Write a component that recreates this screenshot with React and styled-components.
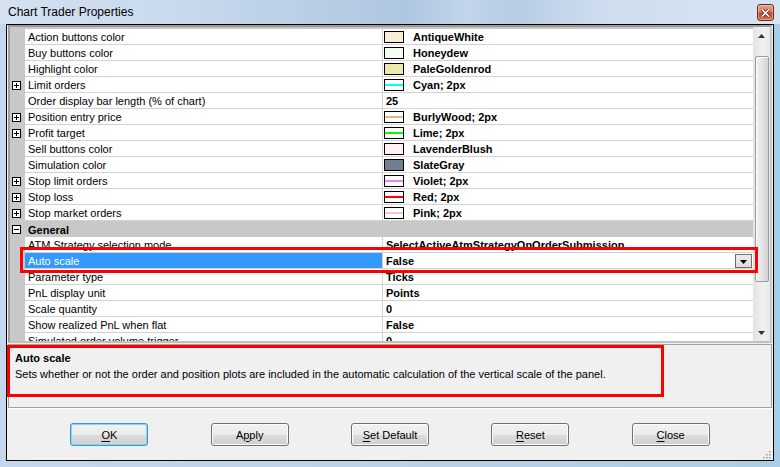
import React from "react"
import styled, { createGlobalStyle } from "styled-components"

const GlobalStyle = createGlobalStyle`
    html, body {
        margin: 0;
        padding: 0;
        background: #ffffff;
    }
    body {
        font-family: "Liberation Sans", Arial, sans-serif;
        font-size: 11px;
        color: #000;
    }
    * {
        box-sizing: border-box;
    }
`

const rows = [
    { name: "Action buttons color", value: "AntiqueWhite", fill: "#FAEBD7" },
    { name: "Buy buttons color", value: "Honeydew", fill: "#F0FFF0" },
    { name: "Highlight color", value: "PaleGoldenrod", fill: "#EEE8AA" },
    { name: "Limit orders", value: "Cyan; 2px", line: "#00FFFF", expand: true },
    { name: "Order display bar length (% of chart)", value: "25" },
    { name: "Position entry price", value: "BurlyWood; 2px", line: "#DEB887", expand: true },
    { name: "Profit target", value: "Lime; 2px", line: "#00FF00", expand: true },
    { name: "Sell buttons color", value: "LavenderBlush", fill: "#FFF0F5" },
    { name: "Simulation color", value: "SlateGray", fill: "#708090" },
    { name: "Stop limit orders", value: "Violet; 2px", line: "#EE82EE", expand: true },
    { name: "Stop loss", value: "Red; 2px", line: "#FF0000", expand: true },
    { name: "Stop market orders", value: "Pink; 2px", line: "#FFC0CB", expand: true },
    { category: "General" },
    { name: "ATM Strategy selection mode", value: "SelectActiveAtmStrategyOnOrderSubmission" },
    { name: "Auto scale", value: "False", selected: true },
    { name: "Parameter type", value: "Ticks" },
    { name: "PnL display unit", value: "Points" },
    { name: "Scale quantity", value: "0" },
    { name: "Show realized PnL when flat", value: "False" },
    { name: "Simulated order volume trigger", value: "0" },
]

const Expander = ({ open }) => (
    <svg width="9" height="9" viewBox="0 0 9 9">
        <rect x="0.5" y="0.5" width="8" height="8" fill="#fff" stroke="#000" />
        <path d="M2 4.5h5" stroke="#000" />
        {!open && <path d="M4.5 2v5" stroke="#000" />}
    </svg>
)

const App = () => {
    return (
        <>
            <GlobalStyle />
            <Window>
                <TitleBar>
                    <TitleText>Chart Trader Properties</TitleText>
                    <CloseButton>
                        <svg width="9" height="8" viewBox="0 0 9 8">
                            <path d="M1 0.5l7 7M8 0.5l-7 7" stroke="#5a1a0e" strokeWidth="3" />
                            <path d="M1 0.5l7 7M8 0.5l-7 7" stroke="#fff" strokeWidth="1.6" />
                        </svg>
                    </CloseButton>
                </TitleBar>
                <Body>
                    <GridFrame>
                        <GridRows>
                            {rows.map((r, i) =>
                                r.category ? (
                                    <CategoryRow key={i}>
                                        <Gutter><Expander open /></Gutter>
                                        <CategoryName>{r.category}</CategoryName>
                                    </CategoryRow>
                                ) : (
                                    <Row key={i}>
                                        <Gutter>{r.expand && <Expander />}</Gutter>
                                        <NameCell $selected={r.selected}>{r.name}</NameCell>
                                        <ValueCell>
                                            {r.fill && <Swatch style={{ background: r.fill }} />}
                                            {r.line && (
                                                <Swatch>
                                                    <SwatchLine style={{ background: r.line }} />
                                                </Swatch>
                                            )}
                                            <ValueText>{r.value}</ValueText>
                                            {r.selected && (
                                                <DropButton>
                                                    <svg width="7" height="4" viewBox="0 0 7 4">
                                                        <path d="M0 0h7L3.5 4z" fill="#000" />
                                                    </svg>
                                                </DropButton>
                                            )}
                                        </ValueCell>
                                    </Row>
                                )
                            )}
                        </GridRows>
                        <ScrollBar>
                            <ScrollArrow>
                                <svg width="7" height="4" viewBox="0 0 7 4">
                                    <path d="M0 4h7L3.5 0z" fill="#333" />
                                </svg>
                            </ScrollArrow>
                            <Track>
                                <Thumb />
                            </Track>
                            <ScrollArrow>
                                <svg width="7" height="4" viewBox="0 0 7 4">
                                    <path d="M0 0h7L3.5 4z" fill="#333" />
                                </svg>
                            </ScrollArrow>
                        </ScrollBar>
                    </GridFrame>
                    <DescPanel>
                        <DescTitle>Auto scale</DescTitle>
                        <DescText>
                            Sets whether or not the order and position plots are included in the automatic calculation of the vertical scale of the panel.
                        </DescText>
                    </DescPanel>
                    <ButtonBar>
                        <Button $default><u>O</u>K</Button>
                        <Button>A<u>p</u>ply</Button>
                        <Button><u>S</u>et Default</Button>
                        <Button><u>R</u>eset</Button>
                        <Button><u>C</u>lose</Button>
                        <Grip>
                            <svg width="10" height="10" viewBox="0 0 10 10">
                                {[[8, 2], [8, 5], [5, 5], [8, 8], [5, 8], [2, 8]].map(([x, y], i) => (
                                    <rect key={i} x={x} y={y} width="1.5" height="1.5" fill="#9a9a9a" />
                                ))}
                            </svg>
                        </Grip>
                    </ButtonBar>
                </Body>
                <Highlight style={{ left: 20, top: 247, width: 738, height: 26 }} />
                <Highlight style={{ left: 7, top: 345, width: 657, height: 52 }} />
            </Window>
        </>
    )
}

const Window = styled.div`
    position: relative;
    width: 780px;
    height: 467px;
    display: flex;
    flex-direction: column;
    background: linear-gradient(90deg, #c4d7ec 0%, #bcd0e6 50%, #a9cde6 100%);
    overflow: hidden;
`

const TitleBar = styled.div`
    height: 24px;
    display: flex;
    align-items: flex-start;
    padding-left: 8px;
    background: linear-gradient(90deg, #d3e1f0 0%, #c8daed 22%, #b9cee4 40%, #aec6df 52%, #c2d5ea 60%, #b6cce3 66%, #cddcee 76%, #d7e4f2 100%);
`

const TitleText = styled.span`
    font-size: 12px;
    line-height: 25px;
    color: #000;
`

const CloseButton = styled.div`
    margin-left: auto;
    margin-right: 6px;
    margin-top: 4px;
    width: 17px;
    height: 17px;
    border: 1px solid #6e2a1c;
    border-radius: 3px;
    display: flex;
    align-items: center;
    justify-content: center;
    background: linear-gradient(180deg, #eaa58f 0%, #d9765b 45%, #c5462a 55%, #d8724f 100%);
    box-shadow: inset 0 0 0 1px rgba(255, 255, 255, 0.35);
`

const Body = styled.div`
    flex: 1;
    margin: 0 6px 6px;
    border: 1px solid #000;
    background: #f0f0f0;
    display: flex;
    flex-direction: column;
    padding: 0 1px;
`

const GridFrame = styled.div`
    height: 318px;
    display: flex;
    border-top: 2px solid #9a9a9a;
    border-left: 2px solid #a0a0a0;
    border-right: 2px solid #c8c8c8;
    border-bottom: 2px solid #c0c0c0;
    background: #fff;
`

const GridRows = styled.div`
    flex: 1;
    overflow: hidden;
    padding-top: 2px;
    background: linear-gradient(#c8c8c8, #c8c8c8) top / 100% 2px no-repeat, #fff;
`

const Row = styled.div`
    display: flex;
    height: 16px;
`

const Gutter = styled.div`
    width: 15px;
    flex-shrink: 0;
    background: #c8c8c8;
    display: flex;
    align-items: center;
    padding-left: 2px;
    padding-top: 1px;
`

const NameCell = styled.div`
    width: 358px;
    flex-shrink: 0;
    padding: 2px 0 0 3px;
    line-height: 13px;
    white-space: nowrap;
    overflow: hidden;
    border-bottom: 1px solid #d2d2d2;
    border-right: 1px solid #d2d2d2;
    background: ${p => (p.$selected ? "#3399ff" : "#fff")};
    color: ${p => (p.$selected ? "#fff" : "#000")};
`

const ValueCell = styled.div`
    flex: 1;
    display: flex;
    align-items: center;
    padding-left: 3px;
    font-weight: bold;
    white-space: nowrap;
    border-bottom: 1px solid #d2d2d2;
`

const ValueText = styled.span`
    line-height: 13px;
    padding-top: 2px;
`

const Swatch = styled.span`
    width: 20px;
    height: 12px;
    margin-left: -2px;
    margin-right: 9px;
    margin-top: 1px;
    border: 1px solid #000;
    background: #fff;
    display: flex;
    align-items: center;
`

const SwatchLine = styled.span`
    display: block;
    width: 100%;
    height: 2px;
`

const DropButton = styled.span`
    margin-left: auto;
    margin-right: 1px;
    width: 17px;
    height: 14px;
    border: 1px solid #6f6f6f;
    background: linear-gradient(#ececec, #dcdcdc);
    display: flex;
    align-items: center;
    justify-content: center;
    padding-top: 2px;
`

const CategoryRow = styled.div`
    display: flex;
    height: 16px;
    background: #c8c8c8;
`

const CategoryName = styled.div`
    padding: 2px 0 0 3px;
    line-height: 14px;
    font-weight: bold;
`

const ScrollBar = styled.div`
    width: 17px;
    flex-shrink: 0;
    display: flex;
    flex-direction: column;
    background: linear-gradient(90deg, #e3e3e3, #f1f1f1 60%, #e8e8e8);
`

const ScrollArrow = styled.div`
    height: 17px;
    display: flex;
    align-items: center;
    justify-content: center;
`

const Track = styled.div`
    flex: 1;
    padding: 12px 1px 42px 2px;
    display: flex;
`

const Thumb = styled.div`
    flex: 1;
    border: 1px solid #9b9b9b;
    border-radius: 2px;
    background: linear-gradient(90deg, #f2f2f2, #e4e4e4 50%, #d2d2d2);
    box-shadow: inset 1px 1px 0 #fff;
`

const DescPanel = styled.div`
    margin-top: 1px;
    height: 64px;
    border: 1px solid #a0a0a0;
    box-shadow: 0 1px 0 #fff;
    padding: 5px 6px;
    line-height: 16px;
    white-space: nowrap;
    overflow: hidden;
`

const DescTitle = styled.div`
    font-weight: bold;
`

const DescText = styled.div`
    font-size: 11px;
`

const ButtonBar = styled.div`
    position: relative;
    flex: 1;
    display: flex;
    align-items: flex-start;
    justify-content: space-evenly;
    padding-top: 15px;
`

const Button = styled.div`
    width: 78px;
    height: 23px;
    border: 1px solid ${p => (p.$default ? "#3c98c8" : "#707070")};
    border-radius: 3px;
    display: flex;
    align-items: center;
    justify-content: center;
    font-size: 11px;
    background: linear-gradient(180deg, #f2f2f2 0%, #ebebeb 50%, #dddddd 51%, #cfcfcf 100%);
    box-shadow: inset 0 0 0 1px ${p => (p.$default ? "#7fd8f8" : "#fcfcfc")};

    u {
        text-decoration-thickness: 1px;
        text-underline-offset: 2px;
    }
`

const Grip = styled.div`
    position: absolute;
    right: 1px;
    bottom: 1px;
    line-height: 0;
`

const Highlight = styled.div`
    position: absolute;
    border: 3px solid #ff0000;
    pointer-events: none;
`

export default App
